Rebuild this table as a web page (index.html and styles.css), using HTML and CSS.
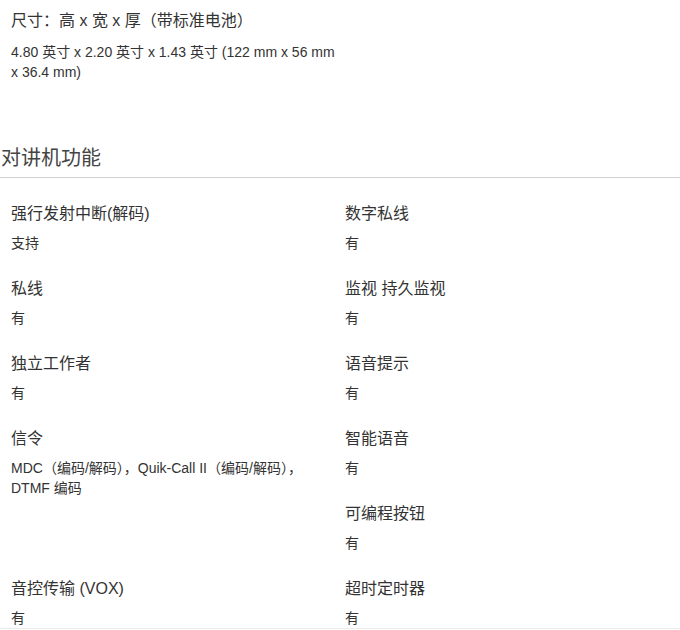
FILE: index.html
```html
<!DOCTYPE html>
<html lang="zh-CN">
<head>
    <meta charset="UTF-8">
    <meta name="viewport" content="width=device-width, initial-scale=1.0">
    <title>规格参数</title>
    <link rel="stylesheet" href="styles.css">
</head>
<body>
    <div class="spec-top">
        <div class="spec-label">尺寸：高 x 宽 x 厚（带标准电池）</div>
        <div class="spec-value">4.80 英寸 x 2.20 英寸 x 1.43 英寸 (122 mm x 56 mm x 36.4 mm)</div>
    </div>

    <h2 class="section-title">对讲机功能</h2>

    <div class="spec-grid">
        <div class="spec-item">
            <div class="spec-label">强行发射中断(解码)</div>
            <div class="spec-value">支持</div>
        </div>
        <div class="spec-item">
            <div class="spec-label">数字私线</div>
            <div class="spec-value">有</div>
        </div>
        <div class="spec-item">
            <div class="spec-label">私线</div>
            <div class="spec-value">有</div>
        </div>
        <div class="spec-item">
            <div class="spec-label">监视 持久监视</div>
            <div class="spec-value">有</div>
        </div>
        <div class="spec-item">
            <div class="spec-label">独立工作者</div>
            <div class="spec-value">有</div>
        </div>
        <div class="spec-item">
            <div class="spec-label">语音提示</div>
            <div class="spec-value">有</div>
        </div>
        <div class="spec-item tall">
            <div class="spec-label">信令</div>
            <div class="spec-value">MDC（编码/解码），Quik-Call II（编码/解码），DTMF 编码</div>
        </div>
        <div class="spec-item">
            <div class="spec-label">智能语音</div>
            <div class="spec-value">有</div>
        </div>
        <div class="spec-item">
            <div class="spec-label">可编程按钮</div>
            <div class="spec-value">有</div>
        </div>
        <div class="spec-item">
            <div class="spec-label">音控传输 (VOX)</div>
            <div class="spec-value">有</div>
        </div>
        <div class="spec-item">
            <div class="spec-label">超时定时器</div>
            <div class="spec-value">有</div>
        </div>
    </div>
</body>
</html>
```

FILE: styles.css
```css
body {
    margin: 0;
    font-family: "Liberation Sans", "Noto Sans CJK SC", sans-serif;
    color: #333;
    background-color: #fff;
}
.spec-top {
    width: 345px;
    box-sizing: border-box;
    padding: 9px 0 0 11px;
}
.spec-label {
    font-size: 16px;
    line-height: 24px;
    color: #333;
}
.spec-value {
    font-size: 14px;
    line-height: 20px;
    color: #333;
    margin-top: 7px;
}
.spec-top .spec-value {
    margin-top: 9px;
}
.section-title {
    margin: 62px 0 0 0;
    padding: 0 0 5px 1px;
    font-size: 20px;
    line-height: 28px;
    font-weight: normal;
    color: #444;
    border-bottom: 1px solid #d0d0d0;
}
.spec-grid {
    display: grid;
    grid-template-columns: 334px 1fr;
    row-gap: 14px;
    margin-top: 14px;
    border-bottom: 1px solid #ececec;
}
.spec-item {
    padding: 10px 10px 0 11px;
}
.spec-item.tall {
    grid-row: span 2;
}
```
